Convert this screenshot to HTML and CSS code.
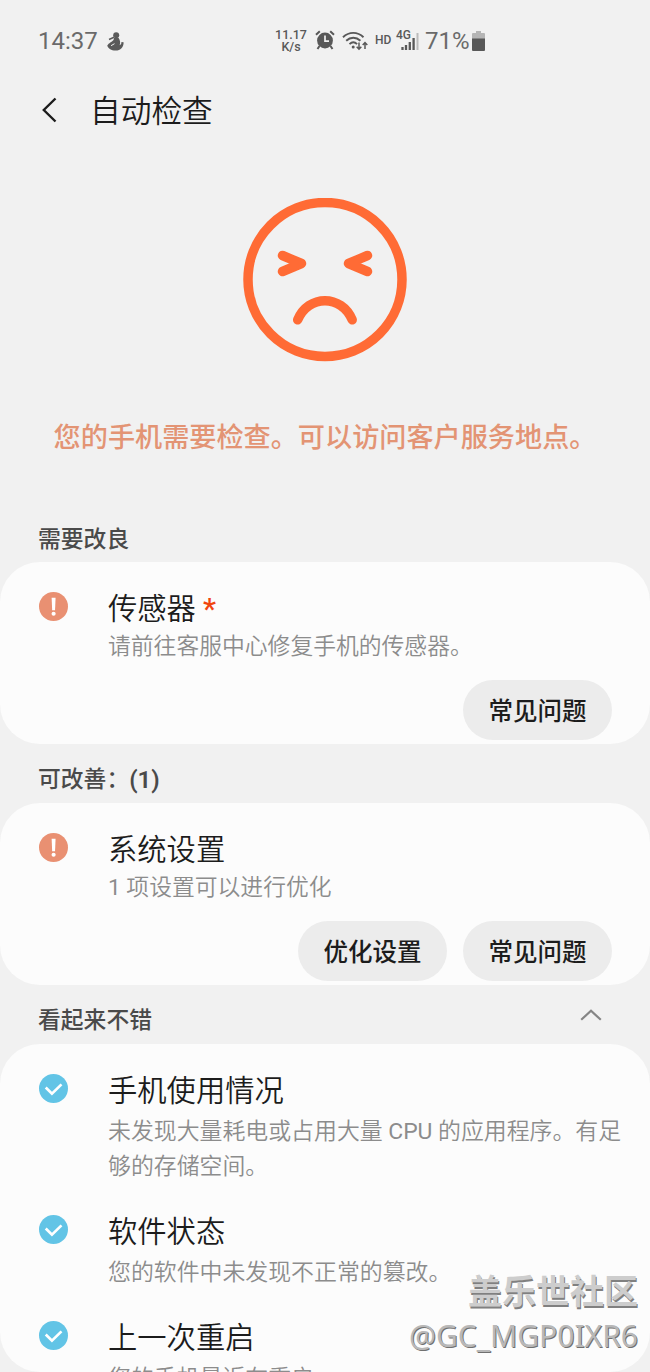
FILE: index.html
```
<!DOCTYPE html>
<html lang="zh-CN">
<head>
    <meta charset="UTF-8">
    <meta name="viewport" content="width=device-width, initial-scale=1.0">
    <title>自动检查</title>
    <link rel="stylesheet" href="styles.css">
</head>
<body>

    <!-- 公用图标 -->
    <svg class="defs" width="0" height="0">
        <symbol id="icon-warn" viewBox="0 0 28 28">
            <circle cx="14" cy="14" r="14" fill="#e99072"/>
            <path d="M12.2 5.5h3.8l-.5 12h-2.8z" fill="#fff"/>
            <circle cx="14.1" cy="21" r="2" fill="#fff"/>
        </symbol>
        <symbol id="icon-ok" viewBox="0 0 28 28">
            <circle cx="14" cy="14" r="14" fill="#62c4e6"/>
            <path d="M6.500 13l6 6 9.200-9" fill="none" stroke="#fff" stroke-width="2.600"/>
        </symbol>
    </svg>

    <div class="screen">
        <!-- 状态栏 -->
        <div class="status-bar">
            <span class="time">14:37</span>
            <svg class="notice" width="17" height="19" viewBox="0 0 17 19">
                <circle cx="9.2" cy="3.2" r="3" fill="#5a5a5a"/>
                <path d="M7 6h4.6c1.6 2.4 2 5 1 7.2 1-.4 2-1.5 1.800-3.300l2.200.3c.2 4.800-3 8.300-8 8.300C4 18.500 1.600 16.500.2 13.700 2 10.500 4.500 10.500 6.500 8z" fill="#5a5a5a"/>
                <path d="M2 7.500l5-2.200M3.500 13.300l3-1.600" fill="none" stroke="#5a5a5a" stroke-width="1.500"/>
                <path d="M4 13.700l3.500-2" fill="none" stroke="#f1f1f1" stroke-width="1"/>
            </svg>
            <div class="speed">
                <span>11.17</span>
                <span>K/s</span>
            </div>
            <svg class="alarm" width="20" height="20" viewBox="0 0 20 20">
                <circle cx="10" cy="10.500" r="7.900" fill="#585858"/>
                <path d="M1 4.800L4.800 1.300M19 4.800L15.200 1.300M4.500 16l-2 3M15.500 16l2 3" fill="none" stroke="#585858" stroke-width="2"/>
                <path d="M10 5.500v5.700h4" fill="none" stroke="#f1f1f1" stroke-width="1.700"/>
            </svg>
            <svg class="wifi" width="26" height="20" viewBox="0 0 26 20">
                <g fill="none" stroke="#585858" stroke-width="1.900">
                    <path d="M1 6.200c6-5.800 14.500-5.800 20.500 0"/>
                    <path d="M4.200 9.800c4.200-4 10-4 14.200 0"/>
                    <path d="M7.500 13.100c2.300-2.200 5.300-2.200 7.600 0"/>
                </g>
                <circle cx="11.200" cy="16" r="1.500" fill="#585858"/>
                <path d="M17 11.500v6.500M14.700 15.700l2.300 2.500 2.300-2.500M23 18v-6M20.700 14l2.300-2.500 2.300 2.500" fill="none" stroke="#585858" stroke-width="1.500"/>
            </svg>
            <span class="hd">HD</span>
            <div class="signal">
                <span class="net">4G</span>
                <svg width="18" height="18" viewBox="0 0 18 18">
                    <path d="M1.500 15v3M5 13V18M8.800 10V18M12.600 6V18" fill="none" stroke="#585858" stroke-width="2.300"/>
                    <path d="M16.500 1v17" fill="none" stroke="#bbb" stroke-width="2"/>
                </svg>
            </div>
            <span class="percent">71%</span>
            <svg class="battery" width="13" height="20" viewBox="0 0 13 20">
                <path d="M4 0h5v2h3q1 0 1 1v5H0V3q0-1 1-1h3z" fill="#b5b5b5"/>
                <path d="M0 7.500h13V19q0 1-1 1H1q-1 0-1-1z" fill="#585858"/>
            </svg>
        </div>

        <!-- 标题栏 -->
        <header class="title-bar">
            <svg width="16" height="26" viewBox="0 0 16 26">
                <path d="M13.500 1.500L1.800 13l11.700 11.500" fill="none" stroke="#1c1c1c" stroke-width="2.400"/>
            </svg>
            <h1>自动检查</h1>
        </header>

        <!-- 检查结果 -->
        <div class="result">
            <svg class="face" width="164" height="164" viewBox="0 0 164 164">
                <g fill="none" stroke="#ff6b35" stroke-width="9.500" stroke-linecap="round" stroke-linejoin="round">
                    <circle cx="82" cy="81.500" r="77"/>
                    <path d="M39.500 57.500l19 8-19 8M124.500 57.500l-19 8 19 8"/>
                    <path d="M54.700 121.800c10.500-25.500 44-25.500 54.500 0"/>
                </g>
            </svg>
            <p>您的手机需要检查。可以访问客户服务地点。</p>
        </div>

        <h2 class="section-title">需要改良</h2>
        <section class="card">
            <div class="item">
                <svg class="icon"><use href="#icon-warn"/></svg>
                <div class="text">
                    <h3>传感器 <span class="star">*</span></h3>
                    <p>请前往客服中心修复手机的传感器。</p>
                </div>
            </div>
            <div class="actions">
                <button class="btn">常见问题</button>
            </div>
        </section>

        <h2 class="section-title">可改善：<span class="count">(1)</span></h2>
        <section class="card">
            <div class="item">
                <svg class="icon"><use href="#icon-warn"/></svg>
                <div class="text">
                    <h3>系统设置</h3>
                    <p><span class="latin">1</span> 项设置可以进行优化</p>
                </div>
            </div>
            <div class="actions">
                <button class="btn">优化设置</button>
                <button class="btn">常见问题</button>
            </div>
        </section>

        <h2 class="section-title">看起来不错
            <svg class="arrow" width="22" height="12" viewBox="0 0 22 12">
                <path d="M1.200 10.800L11 1.800l9.800 9" fill="none" stroke="#858585" stroke-width="2.200"/>
            </svg>
        </h2>
        <section class="card card-list">
            <div class="item">
                <svg class="icon"><use href="#icon-ok"/></svg>
                <div class="text">
                    <h3>手机使用情况</h3>
                    <p>未发现大量耗电或占用大量 <span class="latin">CPU</span> 的应用程序。有足够的存储空间。</p>
                </div>
            </div>
            <div class="item">
                <svg class="icon"><use href="#icon-ok"/></svg>
                <div class="text">
                    <h3>软件状态</h3>
                    <p>您的软件中未发现不正常的篡改。</p>
                </div>
            </div>
            <div class="item">
                <svg class="icon"><use href="#icon-ok"/></svg>
                <div class="text">
                    <h3>上一次重启</h3>
                    <p>您的手机最近在重启。</p>
                </div>
            </div>
        </section>

        <!-- 社区水印 -->
        <div class="watermark">
            <div class="site">盖乐世社区</div>
            <div class="user">@GC_MGP0IXR6</div>
        </div>
    </div>

</body>
</html>
```
FILE: styles.css
```
/* 基本样式 */
* {
    box-sizing: border-box;
}

body {
    margin: 0;
    background-color: #f1f1f1;
    font-family: Roboto, "Noto Sans CJK SC", sans-serif;
    color: #1c1c1c;
}

h1, h2, h3, p {
    margin: 0;
}

svg {
    display: block;
    flex-shrink: 0;
}

.defs {
    position: absolute;
}

.screen {
    position: relative;
    width: 650px;
    height: 1372px;
    overflow: hidden;
    display: flex;
    flex-direction: column;
}

/* 状态栏 */
.status-bar {
    display: flex;
    align-items: center;
    height: 82px;
    padding-left: 38px;
    color: #585858;
    flex-shrink: 0;
}

.time {
    width: 69px;
    font-size: 24px;
    font-weight: 400;
    line-height: 30px;
    color: #6a6a6a;
}

.speed {
    display: flex;
    flex-direction: column;
    align-items: center;
    width: 34px;
    margin-left: 150px;
    font-size: 12.5px;
    font-weight: 500;
    line-height: 12px;
}

.alarm {
    margin: 0 0 2px 7px;
}

.wifi {
    margin-left: 7px;
}

.hd {
    width: 17px;
    margin: 0 0 2px 7px;
    font-size: 12px;
    font-weight: 500;
}

.signal {
    position: relative;
    margin-left: 9px;
}

.net {
    position: absolute;
    left: -5px;
    top: -3px;
    font-size: 12px;
    font-weight: 500;
    line-height: 12px;
    z-index: 1;
}

.percent {
    width: 45px;
    margin-left: 6px;
    font-size: 24px;
    font-weight: 400;
    line-height: 30px;
    color: #6a6a6a;
}

.battery {
    margin-left: 2px;
}

/* 标题栏 */
.title-bar {
    display: flex;
    align-items: center;
    gap: 32px;
    height: 56px;
    padding-left: 42px;
    flex-shrink: 0;
}

.title-bar h1 {
    padding-top: 3px;
    font-size: 30.7px;
    font-weight: 350;
    line-height: 44px;
}

/* 检查结果 */
.result {
    display: flex;
    flex-direction: column;
    align-items: center;
    height: 380px;
    padding-top: 60px;
    flex-shrink: 0;
}

.result p {
    margin-top: 57px;
    font-size: 27.15px;
    font-weight: 500;
    line-height: 38px;
    color: #e39474;
}

/* 分组标题 */
.section-title {
    display: flex;
    align-items: center;
    justify-content: space-between;
    height: 59px;
    padding: 13px 48px 0 38px;
    font-size: 22.8px;
    font-weight: 500;
    line-height: 34px;
    color: #4a4a4a;
    flex-shrink: 0;
}

.result + .section-title {
    height: 44px;
    padding-top: 0;
}

.count {
    flex-grow: 1;
    font-size: 24px;
    font-weight: 600;
}

.arrow {
    margin-bottom: 13px;
}

/* 卡片 */
.card {
    height: 182px;
    padding: 26px 38px 4px;
    background-color: #fcfcfc;
    border-radius: 40px;
    flex-shrink: 0;
}

.item {
    display: flex;
}

.icon {
    width: 29px;
    height: 29px;
    margin: 4px 40px 0 1px;
}

.item h3 {
    padding-top: 1px;
    font-size: 29.3px;
    font-weight: 350;
    line-height: 41px;
}

.item p {
    font-size: 22.8px;
    font-weight: 350;
    line-height: 34px;
    color: #8c8c8c;
}

.latin {
    font-weight: 400;
}

.star {
    color: #f0450f;
    font-weight: 500;
}

.actions {
    display: flex;
    justify-content: flex-end;
    gap: 16px;
    margin-top: 16px;
}

.btn {
    width: 149px;
    height: 60px;
    padding: 0 0 1px;
    border: none;
    border-radius: 30px;
    background-color: #ececec;
    color: #1c1c1c;
    font-family: inherit;
    font-size: 24.5px;
    font-weight: 500;
}

/* 检查正常的列表 */
.card-list {
    display: flex;
    flex-direction: column;
    gap: 27px;
    height: 328px;
    padding-right: 20px;
    overflow: hidden;
}

.card-list p {
    margin-top: 2px;
    font-size: 22.9px;
    line-height: 35px;
}

/* 社区水印 */
.watermark {
    position: absolute;
    right: 12px;
    bottom: 14px;
    text-align: right;
    white-space: nowrap;
}

.site {
    font-size: 34px;
    font-weight: 700;
    line-height: 44px;
    color: #cdcdcd;
    text-shadow: 1px 2px 0 #808080;
}

.user {
    font-family: "Noto Sans", sans-serif;
    font-size: 30px;
    line-height: 44px;
    color: #b8b8b8;
    text-shadow: 1px 1px 0 #707070;
}
```
